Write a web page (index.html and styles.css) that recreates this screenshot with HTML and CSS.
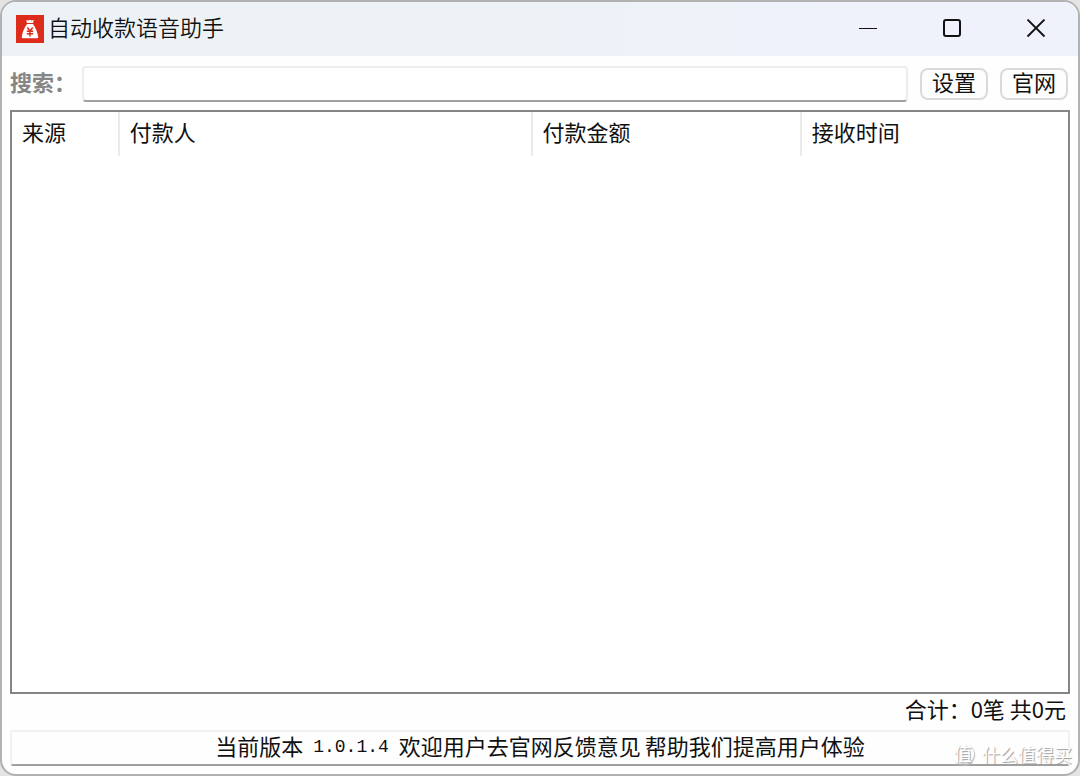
FILE: index.html
```html
<!DOCTYPE html>
<html lang="zh-CN">
<head>
  <meta charset="UTF-8" />
  <meta name="viewport" content="width=device-width, initial-scale=1.0" />
  <title>自动收款语音助手</title>
  <link rel="stylesheet" href="styles.css">
</head>
<body>
  <div class="window">
    <header class="titlebar">
      <svg class="app-icon" viewBox="0 0 28 28" aria-hidden="true">
        <rect width="28" height="28" fill="#dd2c1c" />
        <path d="M10.2 5 L12.4 5.6 L14 4.8 L15.6 5.6 L17.8 5 L17 8 L11 8 Z" fill="#fff" />
        <path d="M11 9 H17 C18.5 11.5 21 14.5 22.3 22 Q22.5 23.3 21 23.3 H7 Q5.5 23.3 5.7 22 C7 14.5 9.5 11.5 11 9 Z" fill="#fff" />
        <path d="M11.3 12.5 L14 16 L16.7 12.5 M14 16 V21.5 M10.8 16.3 H17.2 M10.8 18.8 H17.2" fill="none" stroke="#dd2c1c" stroke-width="1.5" />
      </svg>
      <h1>自动收款语音助手</h1>
      <div class="window-controls">
        <button type="button" aria-label="最小化">
          <svg viewBox="0 0 20 20"><path d="M1 9.5 H19" /></svg>
        </button>
        <button type="button" aria-label="最大化">
          <svg viewBox="0 0 20 20"><rect x="2" y="1" width="16" height="16" rx="2" stroke-width="2" /></svg>
        </button>
        <button type="button" aria-label="关闭">
          <svg viewBox="0 0 20 20"><path d="M1.5 0.5 L18.5 17.5 M18.5 0.5 L1.5 17.5" stroke-width="1.8" /></svg>
        </button>
      </div>
    </header>

    <form class="toolbar">
      <label for="search">搜索：</label>
      <input type="text" id="search" />
      <button type="button">设置</button>
      <button type="button">官网</button>
    </form>

    <main class="list">
      <table>
        <thead>
          <tr>
            <th class="col-source">来源</th>
            <th class="col-payer">付款人</th>
            <th class="col-amount">付款金额</th>
            <th>接收时间</th>
          </tr>
        </thead>
        <tbody></tbody>
      </table>
    </main>

    <p class="total">合计：0笔 共0元</p>

    <footer class="status">
      <span>当前版本</span>
      <span class="version">1.0.1.4</span>
      <span>欢迎用户去官网反馈意见</span>
      <span>帮助我们提高用户体验</span>
    </footer>

    <div class="watermark">
      <span class="watermark-logo">值</span>
      <span>什么值得买</span>
    </div>
  </div>
</body>
</html>
```

FILE: styles.css
```css
* {
  box-sizing: border-box;
}

body {
  margin: 0;
  background: #e4e4e4;
  color: #111;
  font-family: "Noto Sans CJK SC", sans-serif;
  font-size: 22px;
  line-height: 28px;
}

button, input {
  font: inherit;
  color: inherit;
}

.window {
  position: relative;
  display: flex;
  flex-direction: column;
  min-height: 100vh;
  background: #fefefe;
  border: 2px solid #b2b2b2;
  border-radius: 16px;
  overflow: hidden;
}

.titlebar {
  display: flex;
  align-items: center;
  height: 54px;
  padding-left: 14px;
  background: linear-gradient(to right, #edf2f7 50%, #eff2fb 80%);
}

.app-icon {
  width: 28px;
  height: 28px;
}

h1 {
  flex: 1;
  margin: 0 0 0 4px;
  padding-bottom: 6px;
  font-size: 22px;
  font-weight: 350;
}

.window-controls {
  display: flex;
}

.window-controls button {
  display: flex;
  align-items: center;
  justify-content: center;
  width: 84px;
  height: 54px;
  padding: 0;
  border: none;
  background: none;
}

.window-controls svg {
  width: 20px;
  height: 20px;
  fill: none;
  stroke: #111;
  stroke-width: 1;
}

.toolbar {
  display: flex;
  align-items: center;
  padding: 10px 10px 8px 8px;
}

.toolbar label {
  width: 72px;
  padding-bottom: 6px;
  color: #858585;
  font-weight: bold;
  white-space: nowrap;
}

.toolbar input {
  flex: 1;
  min-width: 0;
  height: 36px;
  padding: 0 8px;
  border: 2px solid #ededed;
  border-bottom-color: #a0a0a0;
  border-radius: 4px;
  background: #fff;
  outline: none;
}

.toolbar button {
  width: 68px;
  height: 32px;
  margin-left: 12px;
  padding: 0 0 6px;
  border: 2px solid #dadada;
  border-radius: 8px;
  background: #fdfdfd;
  line-height: 22px;
}

.list {
  flex: 1;
  margin: 0 8px;
  border: 2px solid #858585;
  background: #fff;
}

table {
  width: 100%;
  border-collapse: collapse;
  table-layout: fixed;
}

th {
  height: 44px;
  padding: 0 10px 6px;
  border-right: 2px solid #ebebeb;
  font-weight: normal;
  text-align: left;
}

th:last-child {
  border-right: none;
}

.col-source {
  width: 10.1%;
}

.col-payer {
  width: 39.1%;
}

.col-amount {
  width: 25.5%;
}

.total {
  margin: 0;
  padding: 0 12px 8px;
  text-align: right;
}

.status {
  display: flex;
  justify-content: center;
  gap: 4px;
  height: 36px;
  margin: 0 8px 8px;
  border: 2px solid #f1f1f1;
  border-bottom-color: #a0a0a0;
  border-radius: 3px;
  line-height: 26px;
}

.version {
  padding: 0 6px;
  font-family: "Liberation Mono", monospace;
  font-size: 18px;
  line-height: 30px;
}

/* site mark lying over the status bar */
.watermark {
  position: absolute;
  right: 6px;
  bottom: 8px;
  display: flex;
  align-items: center;
  gap: 8px;
  color: #fff;
  font-size: 18px;
  line-height: 24px;
  text-shadow: 1px 1px 1px #999;
}

.watermark-logo {
  width: 22px;
  height: 22px;
  border-radius: 50%;
  box-shadow: 1px 1px 1px #bbb;
  line-height: 20px;
  text-align: center;
}
```
